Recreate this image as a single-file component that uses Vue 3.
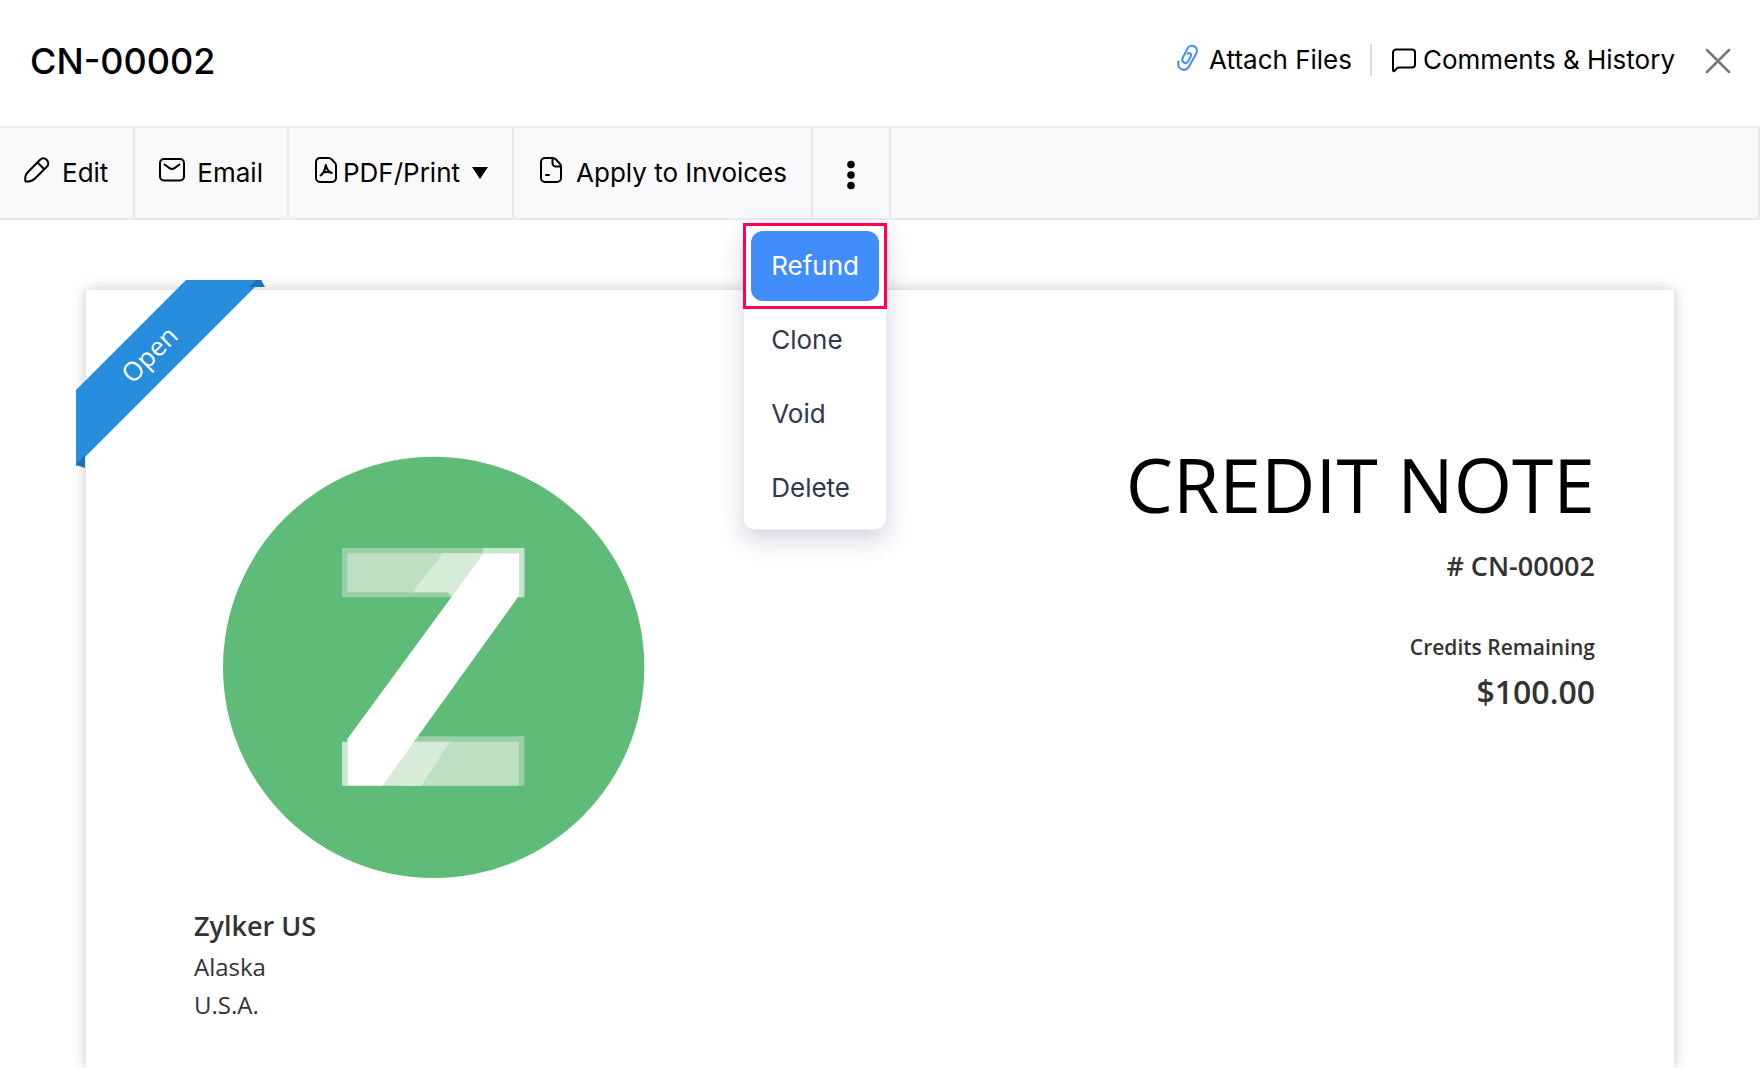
<script setup>
import { ref } from 'vue'

const creditNote = {
  number: 'CN-00002',
  status: 'Open',
  balance: '$100.00',
  organization: {
    name: 'Zylker US',
    address: ['Alaska', 'U.S.A.']
  }
}

const menuItems = ['Refund', 'Clone', 'Void', 'Delete']
const activeItem = ref('Refund')
const menuOpen = ref(true)
</script>

<template>
  <div class="page">
    <header class="header">
      <h1 class="header-title">{{ creditNote.number }}</h1>
      <div class="header-actions">
        <button type="button" class="header-button attach">
          <svg class="icon-link" width="22" height="28" viewBox="0 0 22 28" aria-hidden="true">
            <path
              d="M1.500 17.500c-.8 3.200.3 6.500 3.300 7.800 3 1.200 5.900-.2 7.200-2.800l7-12.400c1.700-3.300.9-6.400-1.600-7.800-2.600-1.400-5.500-.5-7 2.300L6 13.200c-1.200 2.300-.8 4.400.9 5.300 1.700.9 3.500.2 4.500-1.600l2.400-4.700c.6-1.300.3-2.500-.8-3-.9-.4-1.800-.1-2.400.8"
            />
          </svg>
          <span>Attach Files</span>
        </button>
        <button type="button" class="header-button comments">
          <svg width="26" height="26" viewBox="0 0 26 26" aria-hidden="true">
            <path d="M5 2.500h16a3 3 0 0 1 3 3v12a3 3 0 0 1-3 3H8.500c-1.300 0-2.200.4-3 1.200l-2 2c-.8.8-1.500.4-1.500-.7V5.500a3 3 0 0 1 3-3z" />
          </svg>
          <span>Comments &amp; History</span>
        </button>
        <button type="button" class="header-button close" aria-label="Close">
          <svg width="26" height="26" viewBox="0 0 26 26" aria-hidden="true">
            <path d="M2 3l22 22M24 3L2 25" />
          </svg>
        </button>
      </div>
    </header>

    <nav class="toolbar">
      <button type="button" class="tool edit">
        <svg width="26" height="26" viewBox="0 0 26 26" aria-hidden="true">
          <path d="M1.500 24.500c-.6-3 .2-7.200 2.500-9.500L15.800 3c2-2 4.700-2.200 6.800-.2 2.200 2.100 2.200 5 .2 7L11 21.500c-2.400 2.400-6 3.300-9.500 3zM13.500 5.500l6.800 6.800" />
        </svg>
        <span>Edit</span>
      </button>
      <button type="button" class="tool">
        <svg width="26" height="26" viewBox="0 0 26 26" aria-hidden="true">
          <rect x="1" y="2" width="24" height="21.500" rx="4" />
          <path d="M5.500 7.500l5 3.600c1.600 1.100 3.400 1.100 5 0l5-3.600" />
        </svg>
        <span>Email</span>
      </button>
      <button type="button" class="tool pdf">
        <svg width="22" height="26" viewBox="0 0 22 26" aria-hidden="true">
          <path d="M5 1h8.500c1.300 0 2.200.4 3.100 1.300l3 3.100c.9.9 1.400 1.900 1.400 3.200V21a4 4 0 0 1-4 4H5a4 4 0 0 1-4-4V5a4 4 0 0 1 4-4z" />
          <path d="M5.500 18.500c2.600-1.800 4.500-5 5.300-10.500 1 4.600 2.800 7 6 8M7.800 15.600c2.800-1 5.400-1.100 8.900.2" />
        </svg>
        <span>PDF/Print</span>
        <svg class="caret" width="16" height="12" viewBox="0 0 16 12" aria-hidden="true">
          <path d="M0 0h16L8 12z" />
        </svg>
      </button>
      <button type="button" class="tool invoices">
        <svg width="22" height="26" viewBox="0 0 22 26" aria-hidden="true">
          <path d="M5 1h7.500c1.300 0 2.300.4 3.200 1.300l4 4.200c.9.9 1.300 1.900 1.300 3.200V21a4 4 0 0 1-4 4H5a4 4 0 0 1-4-4V5a4 4 0 0 1 4-4z" />
          <path d="M12.500 1v5.200a3.300 3.300 0 0 0 3.300 3.300H21M6 18h3" />
        </svg>
        <span>Apply to Invoices</span>
      </button>
      <div class="more">
        <button
          type="button"
          class="tool more-button"
          aria-label="More actions"
          :aria-expanded="menuOpen"
          @click="menuOpen = !menuOpen"
        >
          <svg class="dots" width="8" height="30" viewBox="0 0 8 30" aria-hidden="true">
            <circle cx="4" cy="4.500" r="3.800" />
            <circle cx="4" cy="15" r="3.800" />
            <circle cx="4" cy="25.500" r="3.800" />
          </svg>
        </button>
        <div v-if="menuOpen" class="menu" role="menu">
          <button
            v-for="item in menuItems"
            :key="item"
            type="button"
            role="menuitem"
            class="menu-item"
            :class="{ active: item === activeItem }"
            @mouseenter="activeItem = item"
          >
            {{ item }}
          </button>
        </div>
      </div>
    </nav>

    <main class="sheet">
      <div class="ribbon">
        <svg width="190" height="190" viewBox="0 0 190 190" aria-hidden="true">
          <path class="ribbon-fold" d="M180 0h5l4 7h-16zM9 174v14l-9-3v-3z" />
          <path class="ribbon-band" d="M110 0h76L0 186v-76z" />
          <path class="ribbon-fold" d="M180 0h6l-7 7h-6zM0 186v-2l9-9v3z" />
        </svg>
        <span class="ribbon-text">{{ creditNote.status }}</span>
      </div>

      <section class="organization">
        <svg class="logo" viewBox="31 42 1278 1278" role="img" aria-label="Zylker">
          <circle class="logo-disc" cx="672" cy="682" r="632" />
          <path class="logo-edge" d="M397 324h547v148H397zM620 889h324v148H600z" />
          <path class="logo-bar" d="M413 340h420v117H413zM560 905h368v132H560z" />
          <path class="logo-shade" d="M700 340h133l-104 132-14-15H608zM500 1037l95-132h126l-86 132z" />
          <path class="logo-edge-light" d="M820 324h124v148h-16V340H820zM397 905h16v132h-16z" />
          <path class="logo-stroke" d="M822 340h106v127L518 1037H413V897l312-425z" />
        </svg>
        <h2 class="organization-name">{{ creditNote.organization.name }}</h2>
        <p v-for="line in creditNote.organization.address" :key="line" class="address-line">
          {{ line }}
        </p>
      </section>

      <section class="summary">
        <h2 class="summary-title">CREDIT NOTE</h2>
        <p class="summary-number"># {{ creditNote.number }}</p>
        <p class="summary-label">Credits Remaining</p>
        <p class="summary-balance">{{ creditNote.balance }}</p>
      </section>
    </main>
  </div>
</template>

<style>
body {
  background: #fff;
}
</style>

<style scoped>
.page {
  display: flex;
  flex-direction: column;
  min-height: 100vh;
  overflow: hidden;
  color: #000;
  font-family: Inter, "Liberation Sans", sans-serif;
  font-size: 26px;
}

h1,
h2,
p {
  margin: 0;
}

button {
  border: 0;
  background: transparent;
  color: inherit;
  font: inherit;
  cursor: pointer;
}

svg {
  display: block;
  flex: none;
  fill: none;
  stroke: currentColor;
  stroke-width: 2;
  stroke-linecap: round;
  stroke-linejoin: round;
}

.header {
  display: flex;
  align-items: center;
  justify-content: space-between;
  padding: 38px 29px 42px 30px;
  border-bottom: 2px solid #ededed;
}

.header-title {
  font-size: 36px;
  font-weight: 500;
  line-height: 46px;
}

.header-actions {
  display: flex;
  align-items: center;
  padding-bottom: 2px;
}

.header-button {
  display: flex;
  align-items: center;
  padding: 0;
  line-height: 32px;
}

.attach {
  gap: 10px;
  padding-right: 18px;
  border-right: 2px solid #ddd;
}

.icon-link {
  margin-bottom: 4px;
  color: #408dfb;
}

.comments {
  gap: 6px;
  padding-left: 19px;
}

.close {
  margin-left: 30px;
  color: #777;
}

.close svg {
  stroke-width: 2.5;
}

.toolbar {
  display: flex;
  min-height: 90px;
  border-right: 2px solid #e9e9f2;
  border-bottom: 2px solid #e9e9f2;
  background: #f9f9fc;
}

.tool {
  display: flex;
  align-items: center;
  gap: 12px;
  padding: 0 24px;
  border-right: 2px solid #e9e9f2;
  line-height: 32px;
  white-space: nowrap;
}

.tool svg {
  margin-bottom: 6px;
}

.edit {
  padding-right: 25px;
}

.pdf {
  gap: 6px;
  padding-left: 26px;
}

.tool .caret {
  margin: 0 0 0 6px;
  fill: #000;
  stroke: none;
}

.invoices {
  gap: 14px;
  padding-left: 26px;
}

.more {
  position: relative;
  display: flex;
}

.more-button {
  padding: 0 34px;
}

.more-button .dots {
  margin: 4px 0 0;
  fill: #000;
  stroke: none;
}

.menu {
  position: absolute;
  z-index: 2;
  top: calc(100% + 4px);
  right: 4px;
  display: flex;
  flex-direction: column;
  gap: 4px;
  min-width: 143px;
  box-sizing: border-box;
  padding: 8px 7px 6px;
  border: 1px solid #ededf5;
  border-radius: 12px;
  background: #fff;
  box-shadow: 0 10px 24px rgba(50, 40, 110, 0.2);
}

.menu-item {
  position: relative;
  padding: 19px 20px;
  border-radius: 12px;
  color: #313652;
  line-height: 32px;
  text-align: left;
}

.menu-item.active {
  background: #408dfb;
  color: #fff;
}

.menu-item.active::after {
  position: absolute;
  inset: -8px;
  border: 3px solid #ff0055;
  content: "";
  pointer-events: none;
}

.sheet {
  position: relative;
  display: flex;
  flex: 1;
  justify-content: space-between;
  margin: 70px 86px 0;
  padding: 0 79px 40px 108px;
  background: #fff;
  box-shadow: 0 0 14px rgba(0, 0, 0, 0.22);
  color: #333;
  font-family: "Open Sans", "Noto Sans", sans-serif;
}

.ribbon {
  position: absolute;
  top: -10px;
  left: -10px;
}

.ribbon svg {
  stroke: none;
}

.ribbon-band {
  fill: #268ddd;
}

.ribbon-fold {
  fill: #1c72b5;
}

.ribbon-text {
  position: absolute;
  top: 74px;
  left: 73px;
  color: #fff;
  font-size: 26px;
  line-height: 32px;
  transform: translate(-50%, -50%) rotate(-45deg);
}

.organization {
  padding-top: 164px;
}

.logo {
  width: 426px;
  margin-left: 26px;
  stroke: none;
}

.logo-disc {
  fill: #5fbb78;
}

.logo-edge {
  fill: #98cfa5;
}

.logo-edge-light {
  fill: #c8e5cd;
}

.logo-bar {
  fill: #bde0c3;
}

.logo-shade {
  fill: #d6ebd8;
}

.logo-stroke {
  fill: #fff;
}

.organization-name {
  margin: 28px 0 4px;
  font-size: 27px;
  font-weight: 600;
  line-height: 36px;
}

.address-line {
  font-size: 24px;
  line-height: 38px;
}

.summary {
  padding-top: 142px;
  text-align: right;
  font-weight: 600;
}

.summary-title {
  color: #000;
  font-size: 75px;
  font-weight: 400;
  line-height: 104px;
}

.summary-number {
  margin-top: 12px;
  font-size: 27px;
  line-height: 36px;
}

.summary-label {
  margin-top: 48px;
  font-size: 21px;
  line-height: 30px;
}

.summary-balance {
  margin-top: 9px;
  font-size: 32px;
  line-height: 42px;
}
</style>
